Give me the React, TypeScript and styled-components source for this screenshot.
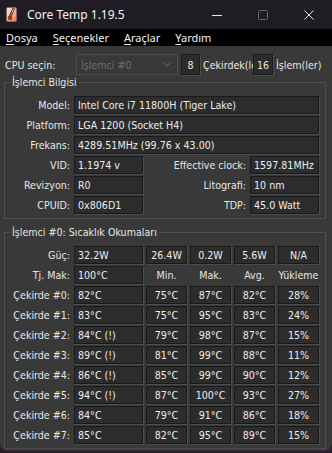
import React from 'react';
import styled, { createGlobalStyle } from 'styled-components';

const GlobalStyle = createGlobalStyle`
  html, body {
    margin: 0;
    padding: 0;
    background: #2a1d30;
  }
  body {
    font-family: "DejaVu Sans Condensed", "DejaVu Sans", sans-serif;
  }
`;

const Window = styled.div`
  width: 332px;
  height: 451px;
  background: #393939;
  border-radius: 0 0 8px 8px;
  overflow: hidden;
  display: flex;
  flex-direction: column;
  color: #e6e6e6;
  font-size: 10.6px;
`;

const TitleBar = styled.div`
  height: 29px;
  background: #201c23;
  display: flex;
  align-items: center;
  padding-left: 6px;
  font-family: "Noto Sans", sans-serif;
  font-size: 12px;
  color: #f2f2f2;
`;

const TitleText = styled.span`
  margin-left: 10px;
`;

const Caption = styled.div`
  margin-left: auto;
  display: flex;
  height: 100%;
`;

const CaptionButton = styled.div`
  width: 46px;
  height: 100%;
  display: flex;
  align-items: center;
  justify-content: center;
`;

const MenuBar = styled.div`
  height: 17px;
  background: #000;
  display: flex;
  align-items: center;
  gap: 15px;
  padding-left: 6px;
  font-family: "Noto Sans", sans-serif;
  font-size: 11px;
  color: #f0f0f0;
`;

const Hotkey = styled.span`
  text-decoration: underline;
  text-underline-offset: 2px;
`;

const Content = styled.div`
  padding-top: 8px;
`;

const CpuRow = styled.div`
  display: flex;
  align-items: center;
  height: 21px;
  padding-left: 5px;
`;

const CpuLabel = styled.span`
  width: 71px;
`;

const Combo = styled.div`
  width: 102px;
  height: 21px;
  box-sizing: border-box;
  border: 1px solid #4b4b4b;
  display: flex;
  align-items: center;
  justify-content: space-between;
  padding: 0 6px 0 4px;
  color: #6c6c6c;
`;

const CountBox = styled.div<{ $w: number; $ml: number }>`
  width: ${(p) => p.$w}px;
  margin-left: ${(p) => p.$ml}px;
  height: 21px;
  box-sizing: border-box;
  background: #2c2c2c;
  border: 1px solid #1c1c1c;
  box-shadow: 1px 1px 0 #4c4c4c;
  display: flex;
  align-items: center;
  justify-content: center;
  flex-shrink: 0;
`;

const ClippedLabel = styled.span<{ $w: number }>`
  width: ${(p) => p.$w}px;
  margin-left: 3px;
  overflow: hidden;
  white-space: nowrap;
  flex-shrink: 0;
`;

const Group = styled.div<{ $mt: number }>`
  position: relative;
  margin: ${(p) => p.$mt}px 6px 0 4px;
  border: 1px solid #4f4f4f;
  padding: 13px 6px 4px 0;
`;

const Legend = styled.span`
  position: absolute;
  top: -8px;
  left: 6px;
  padding: 0 2px 0 1px;
  background: #393939;
  line-height: 14px;
`;

const Grid = styled.div<{ $cols: string }>`
  display: grid;
  grid-template-columns: ${(p) => p.$cols};
  grid-auto-rows: 18px;
  column-gap: 3px;
  row-gap: 2px;
`;

const Label = styled.span<{ $center?: boolean }>`
  text-align: ${(p) => (p.$center ? 'center' : 'right')};
  padding-right: ${(p) => (p.$center ? 0 : 1)}px;
  line-height: 18px;
  white-space: nowrap;
`;

const Field = styled.span<{ $span?: number; $center?: boolean }>`
  grid-column: span ${(p) => p.$span ?? 1};
  box-sizing: border-box;
  background: #2c2c2c;
  border: 1px solid #1a1a1a;
  box-shadow: 1px 1px 0 #4c4c4c;
  line-height: 16px;
  padding-left: ${(p) => (p.$center ? 0 : 3)}px;
  text-align: ${(p) => (p.$center ? 'center' : 'left')};
  white-space: nowrap;
  overflow: hidden;
  color: #ededed;
`;

const AppIcon = () => (
  <svg width="11" height="15" viewBox="0 0 11 15">
    <defs>
      <linearGradient id="ic" x1="0" y1="0" x2="1" y2="1">
        <stop offset="0" stopColor="#fbe9e4" />
        <stop offset="0.6" stopColor="#f4b48c" />
        <stop offset="1" stopColor="#e0702e" />
      </linearGradient>
    </defs>
    <rect x="0.5" y="0.5" width="10" height="14" rx="1.5" fill="url(#ic)" stroke="#8a6a60" />
    <path d="M7.5 2 L4 10" stroke="#3a3030" strokeWidth="2.6" strokeLinecap="round" />
    <path d="M7.5 2 L4 10" stroke="#d8d0d0" strokeWidth="1" strokeLinecap="round" />
    <path d="M6 5.5 L4 10" stroke="#d8202a" strokeWidth="1" />
    <circle cx="4" cy="11" r="2" fill="#d8202a" stroke="#3a3030" strokeWidth="0.6" />
  </svg>
);

const Chevron = () => (
  <svg width="8" height="5" viewBox="0 0 8 5">
    <path d="M0.5 0.5 L4 4 L7.5 0.5" fill="none" stroke="#6c6c6c" strokeWidth="1" />
  </svg>
);

const power = ['32.2W', '26.4W', '0.2W', '5.6W', 'N/A'];

const cores = [
  ['82°C', '75°C', '87°C', '82°C', '28%'],
  ['83°C', '75°C', '95°C', '83°C', '24%'],
  ['84°C (!)', '79°C', '98°C', '87°C', '15%'],
  ['89°C (!)', '81°C', '99°C', '88°C', '11%'],
  ['86°C (!)', '85°C', '99°C', '90°C', '12%'],
  ['94°C (!)', '87°C', '100°C', '93°C', '27%'],
  ['84°C', '79°C', '91°C', '86°C', '18%'],
  ['85°C', '82°C', '95°C', '89°C', '15%'],
];

const TempRow = ({ label, values }: { label: string; values: string[] }) => (
  <>
    <Label>{label}</Label>
    {values.map((v, i) => (
      <Field key={i} $center={i > 0}>
        {v}
      </Field>
    ))}
  </>
);

export default function App() {
  return (
    <>
      <GlobalStyle />
      <Window>
        <TitleBar>
          <AppIcon />
          <TitleText>Core Temp 1.19.5</TitleText>
          <Caption>
            <CaptionButton>
              <svg width="10" height="10" viewBox="0 0 10 10">
                <path d="M0 5.5 H10" stroke="#e8e8e8" strokeWidth="1" />
              </svg>
            </CaptionButton>
            <CaptionButton>
              <svg width="10" height="10" viewBox="0 0 10 10">
                <rect x="0.5" y="0.5" width="9" height="9" rx="1" fill="none" stroke="#6a666c" />
              </svg>
            </CaptionButton>
            <CaptionButton>
              <svg width="10" height="10" viewBox="0 0 10 10">
                <path d="M0.5 0.5 L9.5 9.5 M9.5 0.5 L0.5 9.5" stroke="#e8e8e8" strokeWidth="1" />
              </svg>
            </CaptionButton>
          </Caption>
        </TitleBar>

        <MenuBar>
          <span><Hotkey>D</Hotkey>osya</span>
          <span><Hotkey>S</Hotkey>eçenekler</span>
          <span><Hotkey>A</Hotkey>raçlar</span>
          <span><Hotkey>Y</Hotkey>ardım</span>
        </MenuBar>

        <Content>
          <CpuRow>
            <CpuLabel>CPU seçin:</CpuLabel>
            <Combo>
              <span>İşlemci #0</span>
              <Chevron />
            </Combo>
            <CountBox $w={19} $ml={3}>8</CountBox>
            <ClippedLabel $w={50}>Çekirdek(ler)</ClippedLabel>
            <CountBox $w={20} $ml={0}>16</CountBox>
            <ClippedLabel $w={48}>İşlem(ler)</ClippedLabel>
          </CpuRow>

          <Group $mt={7}>
            <Legend>İşlemci Bilgisi</Legend>
            <Grid $cols="66px 69px 101px 69px">
              <Label>Model:</Label>
              <Field $span={3}>Intel Core i7 11800H (Tiger Lake)</Field>
              <Label>Platform:</Label>
              <Field $span={3}>LGA 1200 (Socket H4)</Field>
              <Label>Frekans:</Label>
              <Field $span={3}>4289.51MHz (99.76 x 43.00)</Field>
              <Label>VID:</Label>
              <Field>1.1974 v</Field>
              <Label>Effective clock:</Label>
              <Field>1597.81MHz</Field>
              <Label>Revizyon:</Label>
              <Field>R0</Field>
              <Label>Litografi:</Label>
              <Field>10 nm</Field>
              <Label>CPUID:</Label>
              <Field>0x806D1</Field>
              <Label>TDP:</Label>
              <Field>45.0 Watt</Field>
            </Grid>
          </Group>

          <Group $mt={13}>
            <Legend>İşlemci #0: Sıcaklık Okumaları</Legend>
            <Grid $cols="66px 69px repeat(4, 41px)">
              <TempRow label="Güç:" values={power} />
              <Label>Tj. Mak:</Label>
              <Field>100°C</Field>
              <Label $center>Min.</Label>
              <Label $center>Mak.</Label>
              <Label $center>Avg.</Label>
              <Label $center>Yükleme</Label>
              {cores.map((c, i) => (
                <TempRow key={i} label={`Çekirde #${i}:`} values={c} />
              ))}
            </Grid>
          </Group>
        </Content>
      </Window>
    </>
  );
}
